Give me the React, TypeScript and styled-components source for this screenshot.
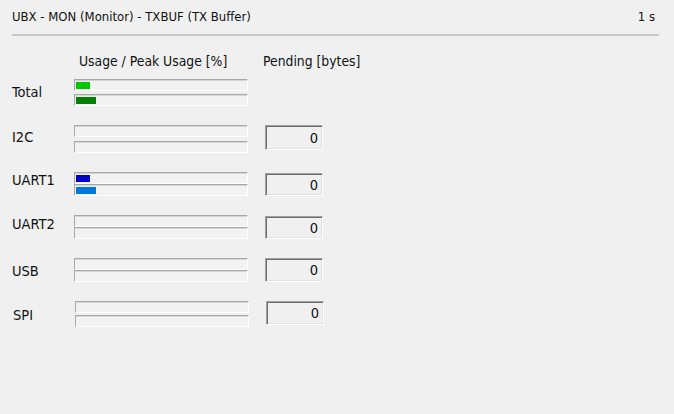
import React from 'react'
import styled, { createGlobalStyle } from 'styled-components'

const GlobalStyle = createGlobalStyle`
  html, body {
    margin: 0;
    padding: 0;
    background: #f0f0f0;
  }
  body {
    font-family: "DejaVu Sans", "Liberation Sans", sans-serif;
    font-stretch: condensed;
    font-size: 14.5px;
    color: #111;
  }
`

const Page = styled.div`
  width: 674px;
  height: 414px;
  box-sizing: border-box;
  padding: 0 15px 0 12px;
  overflow: hidden;
`

const TitleBar = styled.div`
  height: 34px;
  display: flex;
  align-items: center;
  justify-content: space-between;
  border-bottom: 2px solid #c8c8c8;
  line-height: 18px;
  font-size: 13px;
`

const Period = styled.span`
  padding-right: 4px;
  font-size: 13px;
`

const Grid = styled.div`
  display: grid;
  grid-template-columns: 62px 191px 58px;
  align-items: start;
`

const Header = styled(Grid)`
  margin-top: 16px;
  line-height: 18px;
  font-size: 13.8px;
`

const HeadCell = styled.div<{ $shift?: number }>`
  margin-left: ${p => p.$shift ?? 0}px;
  white-space: nowrap;
`

const Rows = styled.div`
  margin-top: 9px;
  display: flex;
  flex-direction: column;
  gap: 19px;
`

const Row = styled(Grid)<{ $nudge?: number }>`
  margin-left: ${p => p.$nudge ?? 0}px;
`

const Label = styled.div<{ $top: number }>`
  margin-top: ${p => p.$top}px;
  line-height: 18px;
`

const BarPair = styled.div<{ $gap: number }>`
  width: 174px;
  display: flex;
  flex-direction: column;
  gap: ${p => p.$gap}px;
`

const Bar = styled.div`
  height: 12px;
  box-sizing: border-box;
  border: 1px solid;
  border-color: #a8a8a8 #ffffff #ffffff #a8a8a8;
  box-shadow: inset 0 1px 0 #d6d6d6;
  background: #f2f2f2;
  padding: 2px 1px 1px 1px;
`

const Fill = styled.div<{ $color: string }>`
  height: 100%;
  background: ${p => p.$color};
`

const Pending = styled.div<{ $h: number; $top: number }>`
  height: ${p => p.$h}px;
  margin-top: ${p => p.$top}px;
  box-sizing: border-box;
  border: 1px solid;
  border-color: #a0a0a0 #ffffff #ffffff #a0a0a0;
  box-shadow: inset 1px 1px 0 #6e6e6e, inset -1px -1px 0 #e3e3e3;
  background: #f0f0f0;
  display: flex;
  align-items: center;
  justify-content: flex-end;
  padding-right: 4px;
  line-height: 18px;
`

type Port = {
  name: string
  usage: number
  peak: number
  colors?: [string, string]
  gap: number
  labelTop: number
  pending?: number
  boxH?: number
  boxTop?: number
  nudge?: number
}

const ports: Port[] = [
  { name: 'Total', usage: 8.2, peak: 11.8, colors: ['#00c800', '#008000'], gap: 3, labelTop: 4 },
  { name: 'I2C', usage: 0, peak: 0, gap: 4, labelTop: 3, pending: 0, boxH: 25 },
  { name: 'UART1', usage: 8.2, peak: 11.8, colors: ['#0000c8', '#0078d7'], gap: 0, labelTop: -1, pending: 0, boxH: 23, boxTop: 1 },
  { name: 'UART2', usage: 0, peak: 0, gap: 0, labelTop: 0, pending: 0, boxH: 23, boxTop: 1 },
  { name: 'USB', usage: 0, peak: 0, gap: 0, labelTop: 4, pending: 0, boxH: 24 },
  { name: 'SPI', usage: 0, peak: 0, gap: 2, labelTop: 5, pending: 0, boxH: 24, nudge: 1 },
]

export default function App() {
  return (
    <Page>
      <GlobalStyle />
      <TitleBar>
        <span>UBX - MON (Monitor) - TXBUF (TX Buffer)</span>
        <Period>1 s</Period>
      </TitleBar>
      <Header>
        <div />
        <HeadCell $shift={5}>Usage / Peak Usage [%]</HeadCell>
        <HeadCell $shift={-2}>Pending [bytes]</HeadCell>
      </Header>
      <Rows>
        {ports.map(p => (
          <Row key={p.name} $nudge={p.nudge}>
            <Label $top={p.labelTop}>{p.name}</Label>
            <BarPair $gap={p.gap}>
              <Bar>
                {p.usage > 0 && <Fill $color={p.colors![0]} style={{ width: `${p.usage}%` }} />}
              </Bar>
              <Bar>
                {p.peak > 0 && <Fill $color={p.colors![1]} style={{ width: `${p.peak}%` }} />}
              </Bar>
            </BarPair>
            {p.pending !== undefined ? (
              <Pending $h={p.boxH ?? 24} $top={p.boxTop ?? 0}>
                {p.pending}
              </Pending>
            ) : (
              <div />
            )}
          </Row>
        ))}
      </Rows>
    </Page>
  )
}
